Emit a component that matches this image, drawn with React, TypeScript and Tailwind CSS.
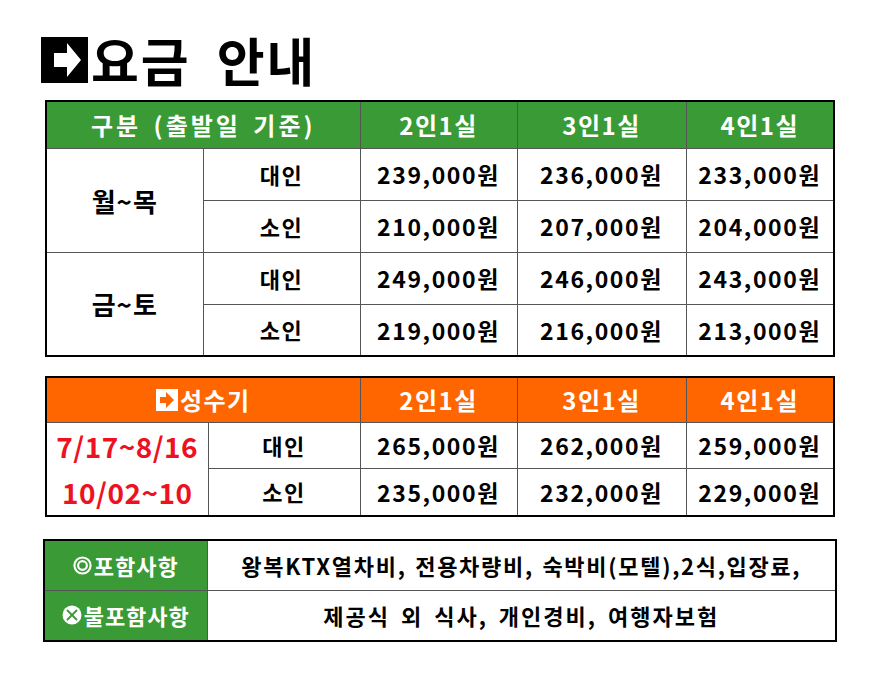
import React from "react";

const F = { fontFamily: '"Noto Sans CJK KR", "Noto Sans", sans-serif' };

function TitleIcon() {
  return (
    <svg width="47" height="46" viewBox="0 0 47 46">
      <rect x="0" y="0" width="47" height="46" fill="#000" />
      <polygon points="13,16 26,16 26,6 40,23 26,40 26,30 13,30" fill="#fff" />
    </svg>
  );
}

function SmallArrow() {
  return (
    <svg width="22" height="22" viewBox="0 0 22 22" className="mr-[2px]">
      <rect x="0" y="0" width="22" height="22" fill="#fff" />
      <polygon points="4,8 10,8 10,3 18,11 10,19 10,14 4,14" fill="#ff6600" />
    </svg>
  );
}

function CircleO() {
  return (
    <svg width="19" height="19" viewBox="0 0 20 20" className="mr-[2px]">
      <circle cx="10" cy="10" r="8.5" fill="none" stroke="#fff" strokeWidth="2.2" />
      <circle cx="10" cy="10" r="4.6" fill="none" stroke="#fff" strokeWidth="2.2" />
    </svg>
  );
}

function CircleX() {
  return (
    <svg width="20" height="20" viewBox="0 0 20 20" className="mr-[2px]">
      <circle cx="10" cy="10" r="9.5" fill="#fff" />
      <line x1="5" y1="5" x2="15" y2="15" stroke="#3a9a35" strokeWidth="1.8" />
      <line x1="15" y1="5" x2="5" y2="15" stroke="#3a9a35" strokeWidth="1.8" />
    </svg>
  );
}

const th = "border border-[#555] text-white font-bold text-[24px] tracking-[1.5px] text-center align-middle";
const td = "border border-[#555] text-black font-bold text-center align-middle";

function Price({ v }: { v: string }) {
  return <td className={td + " text-[23px] tracking-[1.6px]"}>{v}</td>;
}

export default function App() {
  const t1 = [
    ["월~목", [["대인", "239,000원", "236,000원", "233,000원"], ["소인", "210,000원", "207,000원", "204,000원"]]],
    ["금~토", [["대인", "249,000원", "246,000원", "243,000원"], ["소인", "219,000원", "216,000원", "213,000원"]]],
  ] as [string, string[][]][];

  return (
    <div className="w-[875px] h-[697px] bg-white relative" style={F}>
      <div className="flex items-center pl-[41px] pt-[34px]">
        <TitleIcon />
        <div className="text-[52px] font-bold leading-none ml-[3px] tracking-[2px] text-black">
          요금<span className="ml-[26px]">안내</span>
        </div>
      </div>

      <table className="table-fixed border-collapse border-2 border-black ml-[45px] mt-[14px] w-[788px]">
        <colgroup>
          <col className="w-[157px]" />
          <col className="w-[157px]" />
          <col className="w-[157px]" />
          <col className="w-[169px]" />
          <col className="w-[148px]" />
        </colgroup>
        <thead>
          <tr className="h-[47px] bg-[#3a9a35]">
            <th colSpan={2} className={th + " tracking-[3px]"} style={{ wordSpacing: "4px" }}>
              구분 (출발일 기준)
            </th>
            <th className={th}>2인1실</th>
            <th className={th}>3인1실</th>
            <th className={th}>4인1실</th>
          </tr>
        </thead>
        <tbody>
          {t1.map(([day, rows]) =>
            rows.map((r, i) => (
              <tr key={day + i} className="h-[52px]">
                {i === 0 && (
                  <td rowSpan={2} className={td + " text-[26px] tracking-[1px]"}>
                    {day}
                  </td>
                )}
                <td className={td + " text-[22px] tracking-[1.5px]"}>{r[0]}</td>
                <Price v={r[1]} />
                <Price v={r[2]} />
                <Price v={r[3]} />
              </tr>
            ))
          )}
        </tbody>
      </table>

      <table className="table-fixed border-collapse border-2 border-black ml-[45px] mt-[19px] w-[788px]">
        <colgroup>
          <col className="w-[162px]" />
          <col className="w-[152px]" />
          <col className="w-[157px]" />
          <col className="w-[169px]" />
          <col className="w-[148px]" />
        </colgroup>
        <thead>
          <tr className="h-[45px] bg-[#ff6600]">
            <th colSpan={2} className={th}>
              <div className="flex items-center justify-center">
                <SmallArrow />
                성수기
              </div>
            </th>
            <th className={th}>2인1실</th>
            <th className={th}>3인1실</th>
            <th className={th}>4인1실</th>
          </tr>
        </thead>
        <tbody>
          <tr className="h-[46px]">
            <td rowSpan={2} className="border border-[#555] text-center align-middle font-bold text-[28px] tracking-[0.5px] text-[#ee1122] leading-[46px]">
              7/17~8/16
              <br />
              10/02~10
            </td>
            <td className={td + " text-[22px] tracking-[1.5px]"}>대인</td>
            <Price v="265,000원" />
            <Price v="262,000원" />
            <Price v="259,000원" />
          </tr>
          <tr className="h-[46px]">
            <td className={td + " text-[22px] tracking-[1.5px]"}>소인</td>
            <Price v="235,000원" />
            <Price v="232,000원" />
            <Price v="229,000원" />
          </tr>
        </tbody>
      </table>

      <table className="table-fixed border-collapse border-2 border-black ml-[43px] mt-[22px] w-[792px]">
        <colgroup>
          <col className="w-[163px]" />
          <col className="w-[629px]" />
        </colgroup>
        <tbody>
          <tr className="h-[51px]">
            <td className="border border-[#555] bg-[#3a9a35] text-white font-bold text-[22px] tracking-[1px] text-center align-middle">
              <div className="flex items-center justify-center">
                <CircleO />
                포함사항
              </div>
            </td>
            <td className={td + " text-[22px] tracking-[1.7px]"} style={{ wordSpacing: "2px" }}>
              왕복KTX열차비, 전용차량비, 숙박비(모텔),2식,입장료,
            </td>
          </tr>
          <tr className="h-[50px]">
            <td className="border border-[#555] bg-[#3a9a35] text-white font-bold text-[22px] tracking-[1px] text-center align-middle">
              <div className="flex items-center justify-center">
                <CircleX />
                불포함사항
              </div>
            </td>
            <td className={td + " text-[22px] tracking-[2px]"} style={{ wordSpacing: "4px" }}>
              제공식 외 식사, 개인경비, 여행자보험
            </td>
          </tr>
        </tbody>
      </table>
    </div>
  );
}
